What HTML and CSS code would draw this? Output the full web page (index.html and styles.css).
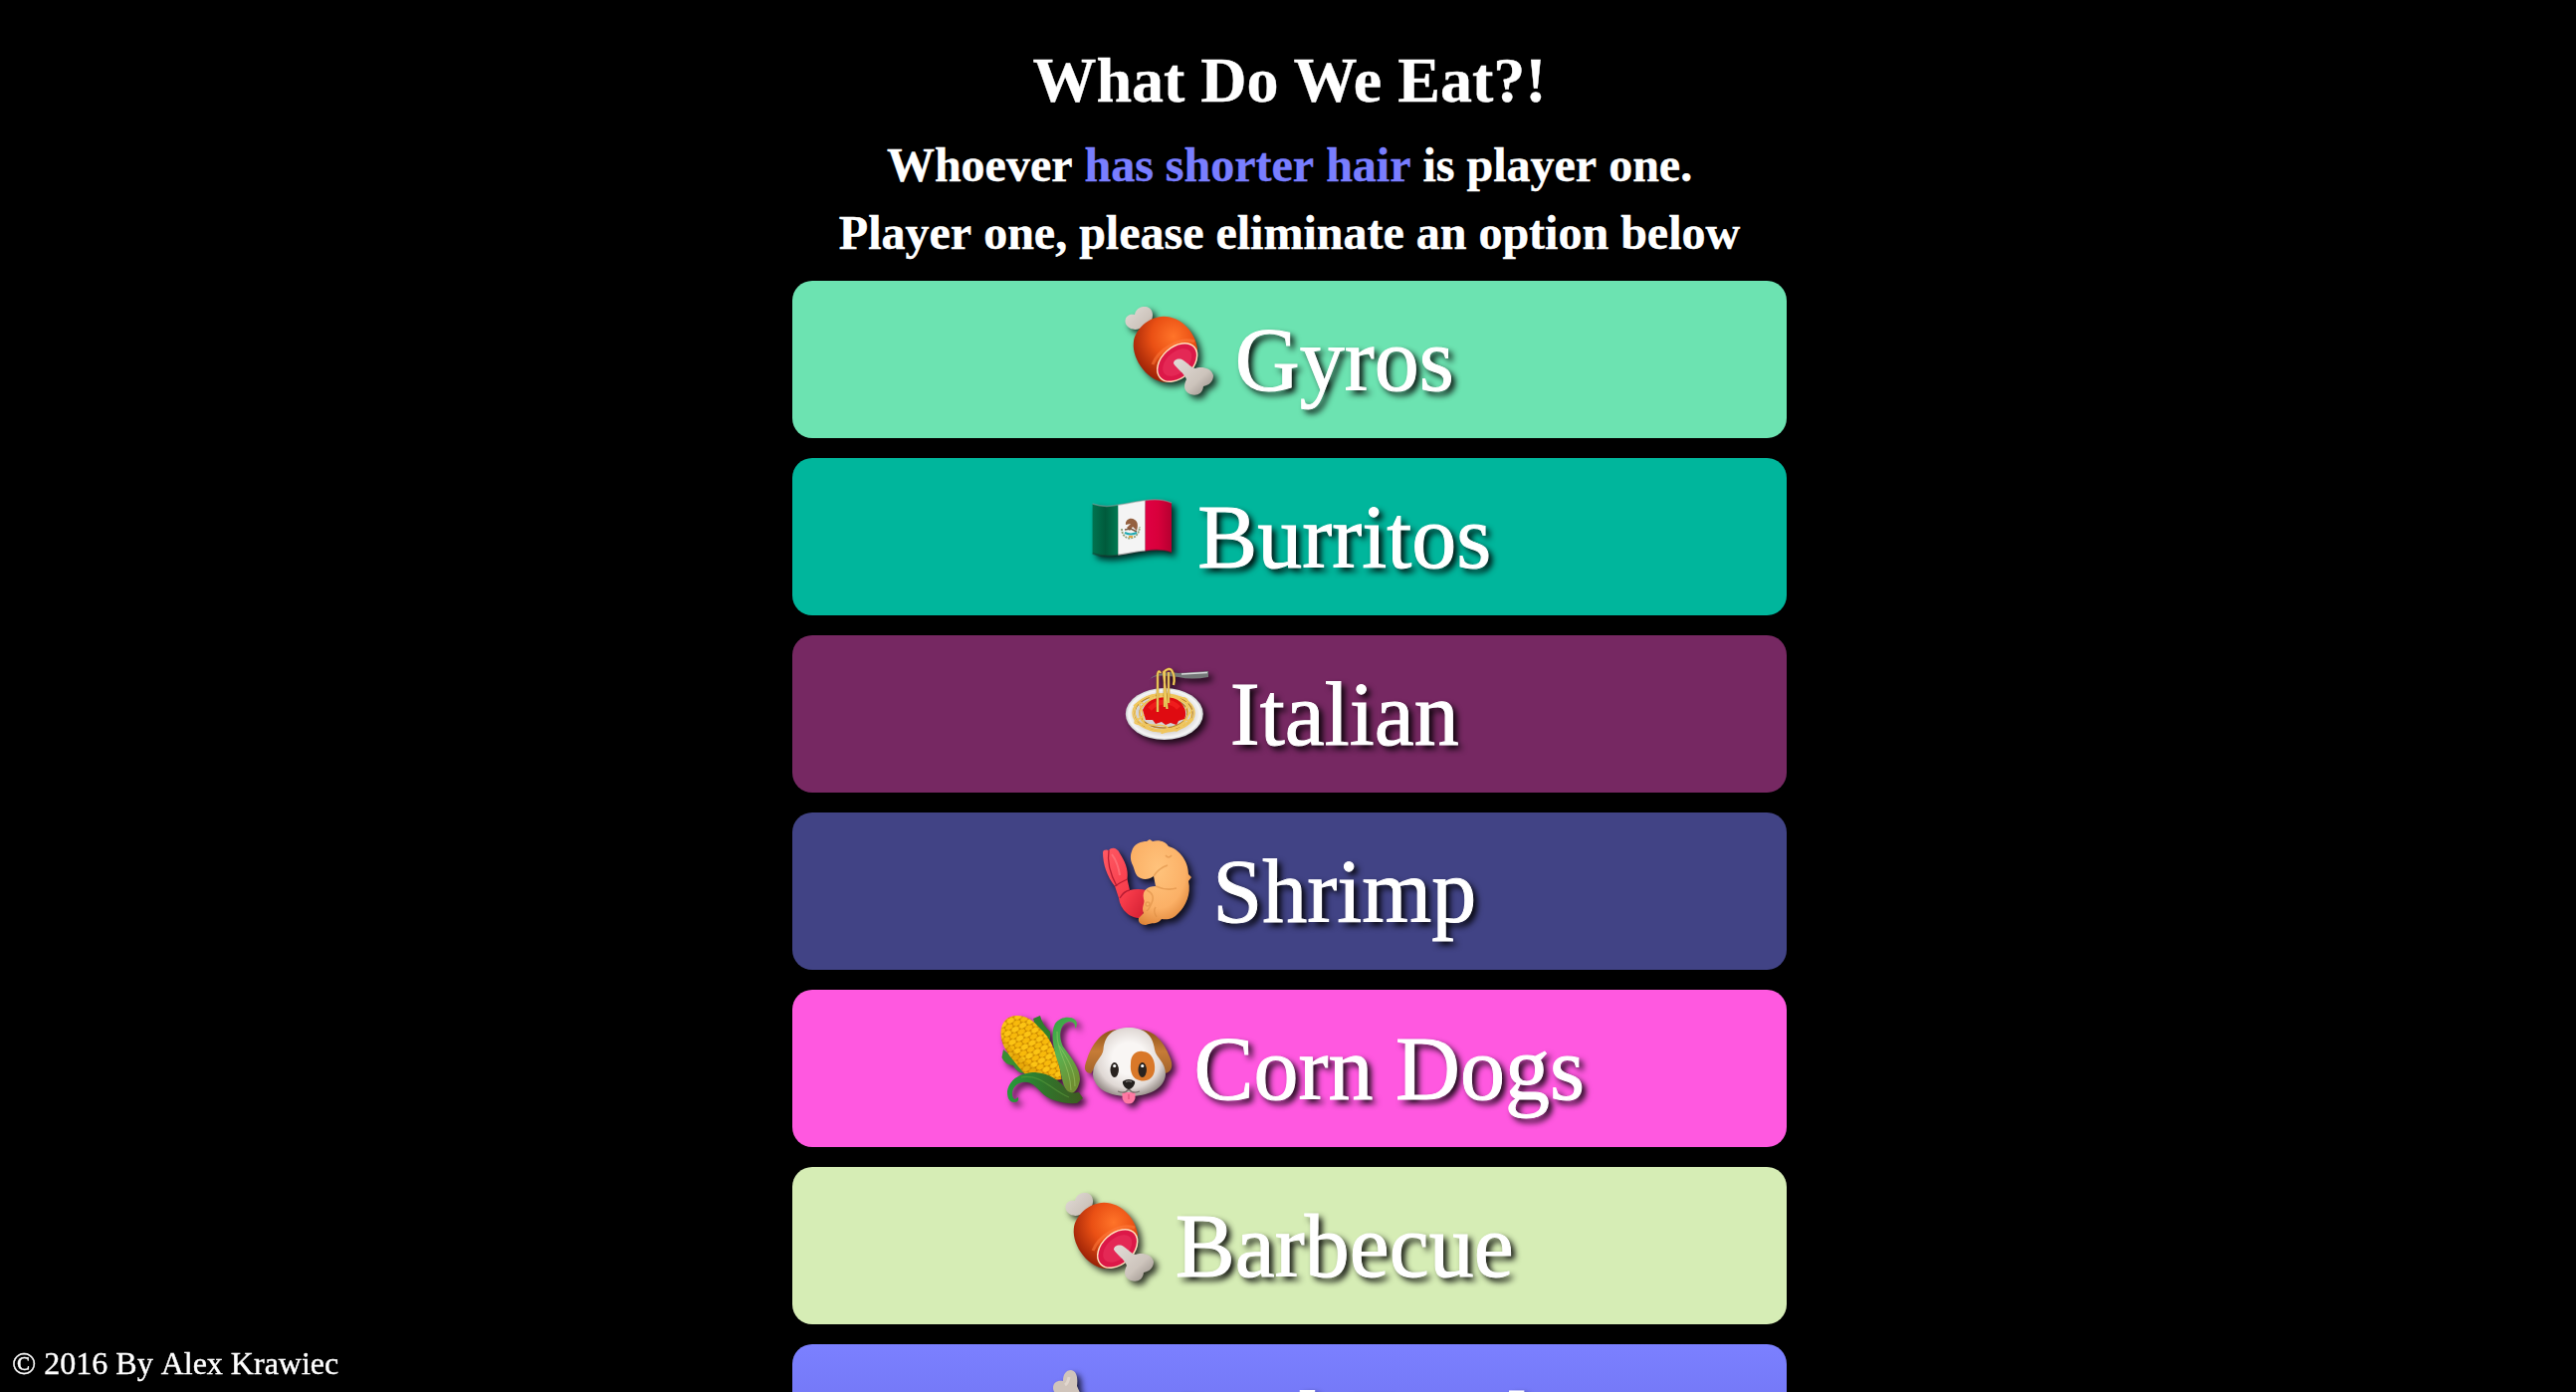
FILE: index.html
```html
<!DOCTYPE html>
<html lang="en">
<head>
<meta charset="utf-8">
<title>What Do We Eat?!</title>
<link rel="stylesheet" href="styles.css">
</head>
<body>
<svg class="defs" aria-hidden="true">
  <defs>
    <radialGradient id="meat" cx=".62" cy=".3" r=".75"><stop offset="0" stop-color="#ff7429"/><stop offset=".45" stop-color="#ea5014"/><stop offset="1" stop-color="#921c05"/></radialGradient>
    <linearGradient id="bone" x1="0" y1="0" x2="1" y2="1"><stop offset="0" stop-color="#e2dcd7"/><stop offset=".6" stop-color="#cdc4bc"/><stop offset="1" stop-color="#918882"/></linearGradient>
    <linearGradient id="mxgreen"><stop offset="0" stop-color="#00734f"/><stop offset=".5" stop-color="#005b3c"/><stop offset="1" stop-color="#007a53"/></linearGradient>
    <linearGradient id="mxred"><stop offset="0" stop-color="#e00043"/><stop offset=".5" stop-color="#d8003b"/><stop offset="1" stop-color="#b50030"/></linearGradient>
    <radialGradient id="plate"><stop offset=".7" stop-color="#d5d3d2"/><stop offset=".92" stop-color="#f6f6f6"/><stop offset="1" stop-color="#c8cccd"/></radialGradient>
    <radialGradient id="fried" cx=".45" cy=".35" r=".7"><stop offset="0" stop-color="#ffc37c"/><stop offset=".65" stop-color="#fbb066"/><stop offset="1" stop-color="#dc8236"/></radialGradient>
    <linearGradient id="tail" x1="0" y1="0" x2="1" y2="1"><stop offset="0" stop-color="#ff5a64"/><stop offset=".6" stop-color="#f73b4a"/><stop offset="1" stop-color="#cf1d30"/></linearGradient>
    <pattern id="kernels" width="8.6" height="10" patternUnits="userSpaceOnUse" patternTransform="rotate(-28)"><rect width="9" height="10" fill="#c88500"/><ellipse cx="4.3" cy="2.5" rx="4" ry="2.6" fill="#fcc414"/><ellipse cx="0" cy="7.5" rx="4" ry="2.6" fill="#f8ba0b"/><ellipse cx="8.6" cy="7.5" rx="4" ry="2.6" fill="#f8ba0b"/></pattern>
    <linearGradient id="leaf" x1="0" y1="0" x2=".4" y2="1"><stop offset="0" stop-color="#2fa243"/><stop offset=".5" stop-color="#5ab251"/><stop offset="1" stop-color="#6f8f32"/></linearGradient>
    <linearGradient id="husk"><stop offset="0" stop-color="#279b3c"/><stop offset=".5" stop-color="#31742b"/><stop offset="1" stop-color="#3f5a20"/></linearGradient>
    <radialGradient id="fur" cx=".5" cy=".45" r=".58"><stop offset=".4" stop-color="#f9f6f4"/><stop offset=".75" stop-color="#e0d9d5"/><stop offset="1" stop-color="#958c87"/></radialGradient>
    <linearGradient id="ear" x1="0" y1="0" x2="0" y2="1"><stop offset="0" stop-color="#8c5217"/><stop offset=".5" stop-color="#c67c37"/><stop offset="1" stop-color="#a3642a"/></linearGradient>
    <symbol id="meat-on-bone" viewBox="0 0 90 90">
      <path d="M16 22C8 25 1 20 1.500 14C2 8 8 7 11 8C12 2 17-.5 22 0C29 1 31 8 27 16L30 24L22 29Z" fill="url(#bone)"/>
      <path d="M9.800 36C11 23 25 10 40 9.800C58 10 72 26 74 42C73 56 59 74 44 76C26 77 8 54 9.800 36Z" fill="url(#meat)"/>
      <path d="M29 58C35 43 56 30 71 35" fill="none" stroke="#ff7b3c" stroke-width="3" opacity=".55"/>
      <ellipse cx="53.700" cy="56" rx="23" ry="15.500" transform="rotate(-42 53.700 56)" fill="#dc1848" stroke="#ffe1bd" stroke-width="1.500"/>
      <ellipse cx="53.700" cy="56" rx="17" ry="10.500" transform="rotate(-42 53.700 56)" fill="#e9335f" opacity=".6"/>
      <path d="M50 57C50 53 56 51 60 54C65 57 67 61 72 62C77 60 88 61 90 69C90 76 85 79 80 80C79 88 73 90 67 88C60 85 60 79 63 73C61 67 53 62 50 57Z" fill="url(#bone)"/>
    </symbol>
  </defs>
</svg>
<main class="page">
  <h1 class="title">What Do We Eat?!</h1>
  <h2 class="lead">Whoever <span class="rule">has shorter hair</span> is player one.</h2>
  <h2 class="lead">Player one, please eliminate an option below</h2>
  <div class="options">
    <div class="option gyros">
      <svg class="icon" viewBox="0 0 90 90"><use href="#meat-on-bone"/></svg>
      <span class="label">Gyros</span>
    </div>
    <div class="option burritos">
      <svg class="icon" viewBox="0 0 90 90">
        <path d="M5.600 20C14 23 23 23 31.500 21V71.500C23 73 14 73 5.600 70Z" fill="url(#mxgreen)"/>
        <path d="M31.300 21C40 20 49 17.500 58.700 16.500V67.500C49 68 40 71 31.300 71.700Z" fill="#f4f4f4"/>
        <path d="M58.600 16.500C68 15 77 15.500 85 19V69C77 66 68 66 58.600 67.500Z" fill="url(#mxred)"/>
        <path d="M5.600 20C14 23 23 23 31.500 21C40 20 49 17.500 58.700 16.500C68 15 77 15.500 85 19" fill="none" stroke="#999" stroke-width="1.500" opacity=".5"/>
        <path d="M5.600 70C14 73 23 73 31.300 71.500C40 71 49 68 58.600 67.500C68 66 77 66 85 69" fill="none" stroke="#222" stroke-width="2" opacity=".35"/>
        <path d="M35 45C35 58 52 58 53 43" fill="none" stroke="#8da078" stroke-width="1.800" stroke-dasharray="2 1"/>
        <path d="M39 41C38 36 44 33 48 36C52 38 51 44 50 47L46 43L43 47L40 44L44 40Z" fill="#94603f"/>
        <path d="M38 46L44 45L50 48" fill="none" stroke="#7a5a44" stroke-width="1.500"/>
        <path d="M38 49Q44 52 50 49" fill="none" stroke="#20a8b0" stroke-width="2"/>
        <path d="M42 52H46V54H42Z" fill="#e2a545"/>
      </svg>
      <span class="label">Burritos</span>
    </div>
    <div class="option italian">
      <svg class="icon" viewBox="0 0 90 90">
        <ellipse cx="45.800" cy="53" rx="39" ry="26" fill="url(#plate)"/>
        <g fill="none" stroke="#b8832c" stroke-width="1.600"><ellipse cx="45" cy="52" rx="29" ry="18"/><ellipse cx="45" cy="52" rx="24" ry="15"/></g>
        <g fill="none" stroke="#f0c65d" stroke-width="1.500">
          <ellipse cx="45" cy="52" rx="31" ry="19"/><ellipse cx="43" cy="51" rx="27" ry="18"/><ellipse cx="47" cy="53" rx="26" ry="17"/>
          <path d="M15 45Q22 38 27 45T20 58T32 64T46 70T59 66T71 59T67 48T58 37T44 36T30 38M20 42C28 55 20 64 32 69C43 74 48 64 58 70C67 66 66 56 74 49M31 37C36 30 40 42 47 35C56 32 59 41 69 42"/>
        </g>
        <path d="M24 49C29 37 43 35 54 37C64 39 70 51 66 58L60 60L58 64L52 62L47 64L43 61L37 63L34 59L27 59Z" fill="#df0b11"/>
        <path d="M31 48C39 39 53 39 60 47" fill="none" stroke="#ff2e28" stroke-width="5" opacity=".5"/>
        <path d="M29 20Q35 12 52 11L60 12L90 10V16Q73 19 60 16L50 15Q36 13 29 20Z" fill="#747878"/>
        <path d="M63 13L89 11.500" stroke="#d7dada" stroke-width="1.500"/>
        <path d="M39 51V13Q40 8 42 12M46 46V10M48.500 48L45 11Q50 6 53 9Q57 15 55 24M50 42V11" fill="none" stroke="#b3852a" stroke-width="2.600"/>
        <path d="M39 51V13Q40 8 42 12M46 46V10M48.500 48L45 11Q50 6 53 9Q57 15 55 24M50 42V11" fill="none" stroke="#f2cf62" stroke-width="1.600"/>
      </svg>
      <span class="label">Italian</span>
    </div>
    <div class="option shrimp">
      <svg class="icon" viewBox="0 0 90 90">
        <path d="M1 14C1 11 5 11 7 12C10 8 16 10 18 15C23 23 27 31 25.500 41L28 52Q36 50 45 52L41 80C35 81 28 78 25 75Q18 69 17 60L13 48C5 38 1 26 1 14Z" fill="url(#tail)"/>
        <path d="M7 12C5 24 9 37 15 48M13 48Q19 44 25.500 41M18 60Q22 53 28 52" fill="none" stroke="#b81c32" stroke-width="1.300"/>
        <path d="M10 16Q16 24 18 37" fill="none" stroke="#ff8087" stroke-width="2" opacity=".6"/>
        <path d="M30 13C32 5 40 3 45 3L48 1L51 3C57 1 64 3 67 8C78 11 87 23 87 36L90 39L87 43C90 56 84 68 77 75C72 81 66 82 60 81C56 87 50 84 44 87C39 87 36 84 37 80L42 75C39 69 44 65 42 61C40 52 46 48 54 48L52 38C48 41 43 42 39 40C33 38 33 31 31 27C29 23 28 18 30 13Z" fill="url(#fried)"/>
        <g fill="none" stroke="#d98b42" stroke-width="1.500" opacity=".55"><path d="M52 38Q57 30 66 27M54 48Q65 53 75 50M45 52Q54 56 50 65T45 72M64 17Q67 21 70 17M55 79Q51 73 54 69"/><circle cx="46" cy="66" r="2"/></g>
      </svg>
      <span class="label">Shrimp</span>
    </div>
    <div class="option corn-dogs">
      <div class="icons">
        <svg class="icon" viewBox="0 0 90 90">
          <path d="M40 3L47 0Q49 9 57 16V25L50 18Q42 12 40 3Z" fill="#2f7f2c"/>
          <path d="M10 34L22 44L31 58Q23 57 20 50Q11 49 8.500 42Z" fill="#398d32"/>
          <path d="M7.500 19C7 6 15-.5 24 0C34 0 41 6 46 12C58 22 66 41 68.500 64C54 66 40 64 31 58C21 46 8 33 7.500 19Z" fill="url(#kernels)"/>
          <path d="M7.500 19C8 33 21 46 31 58C40 64 54 66 68.500 64C48 58 22 42 7.500 19Z" fill="#b97600" opacity=".25"/>
          <path d="M82 13Q83 6 76 6C67 8 65 20 70 31C79 43 87 53 87 64C86 72 82 78 78 78C70 76 69 62 66 50C60 34 57 17 62 8C67 1 77 0 82 4Q86 8 82 13Z" fill="url(#leaf)"/>
          <path d="M64 16C63 37 77 49 78 75M66 30C74 43 82 54 82 71" fill="none" stroke="#9bc664" stroke-width="1" opacity=".6"/>
          <path d="M14 76C16 63 29 57 42 57C57 58 65 65 71 71C75 80 83 77 86 77L90 83L84 88C71 89 55 85 48 77C42 70 35 64 26 68C17 72 18 83 22 84L25 82Q26 87 21 87C15 87 14 81 14 76Z" fill="url(#husk)"/>
          <path d="M28 62C48 58 58 75 76 82" fill="none" stroke="#62a43e" stroke-width="1.200" opacity=".5"/>
        </svg>
        <svg class="icon" viewBox="0 0 90 90">
          <path d="M34 14C20 14 9 28 4 44C0 54 2 57 8 58L21 38Z" fill="url(#ear)"/>
          <path d="M57 14C72 14 82 28 87 41C92 52 88 57 82 58L70 38Z" fill="url(#ear)"/>
          <path d="M46 12C60 12 70 18 72 34C73 42 83 46 83 59C82 74 65 81 46 81C27 81 11 74 10 59C10 46 20 42 20.500 34C22 18 32 12 46 12Z" fill="url(#fur)"/>
          <path d="M48 48C48 39 54 35 60 36C69 36 73 46 72 55C71 63 64 67 57 65C50 64 47 57 48 48Z" fill="#d97829"/>
          <g fill="#29231f"><ellipse cx="31.700" cy="54.500" rx="4.200" ry="7.500"/><ellipse cx="59.700" cy="54.500" rx="4.200" ry="7.500"/></g>
          <g fill="#fff"><circle cx="31.700" cy="50.500" r="1.600"/><circle cx="59.700" cy="50.500" r="1.600"/></g>
          <path d="M39.500 77H52.500V83Q51 88.500 46 88.500T39.500 83Z" fill="#ff78a3"/>
          <path d="M46 79V84" stroke="#df4c7b" stroke-width="1.200"/>
          <path d="M35 76Q42 79 46 74Q50 79 57 76" fill="none" stroke="#78706c" stroke-width="1.300"/>
          <path d="M40 66Q46 62 52 66C53 69 49 74 46 74S39 69 40 66Z" fill="#24201e"/>
          <path d="M43 66.500Q46 65 49 66.500" fill="none" stroke="#8b8583" stroke-width="1.200"/>
        </svg>
      </div>
      <span class="label">Corn Dogs</span>
    </div>
    <div class="option barbecue">
      <svg class="icon" viewBox="0 0 90 90"><use href="#meat-on-bone"/></svg>
      <span class="label">Barbecue</span>
    </div>
    <div class="option soul-food">
      <svg class="icon" viewBox="0 0 90 90">
        <path d="M30 28C40 24 80 31 86 55C90 75 77 89 62 88C42 86 25 55 30 28Z" fill="url(#meat)"/>
        <path d="M19 31C14 27 5 25 5 18C5 12 10 10 15 11C15 4 18 0 23 0C29 1 30 8 29 16L36 32L28 39Z" fill="#d0c4bb"/>
        <path d="M17 15Q20 13 21 7" fill="none" stroke="#f1e8e0" stroke-width="3" opacity=".5"/>
      </svg>
      <span class="label">Soul Food</span>
    </div>
  </div>
</main>
<footer class="footer">© 2016 By Alex Krawiec</footer>
</body>
</html>
```
FILE: styles.css
```css
body {
  margin: 0;
  height: 1398px;
  overflow: hidden;
  background: #000;
  color: #fff;
  font-family: "Liberation Serif", "Times New Roman", serif;
}

.defs {
  position: absolute;
  width: 0;
  height: 0;
}

.page {
  display: flex;
  flex-direction: column;
  align-items: center;
  padding-top: 41px;
  padding-left: 3px;
}

.title {
  margin: 0 0 11px;
  font-size: 64px;
  line-height: 80px;
  -webkit-text-stroke: 0.4px;
}

.lead {
  margin: 0;
  font-size: 48px;
  line-height: 68px;
  font-kerning: none;
  -webkit-text-stroke: 0.4px;
}

.rule {
  color: #797eff;
}

.options {
  display: flex;
  flex-direction: column;
  gap: 20px;
  width: 999px;
  margin-top: 14px;
}

.option {
  display: flex;
  justify-content: center;
  align-items: flex-start;
  gap: 21.5px;
  box-sizing: border-box;
  height: 158px;
  padding-top: 26px;
  padding-right: 1px;
  border-radius: 20px;
}

.icons {
  display: flex;
}

.icon {
  flex: none;
  width: 90px;
  height: 90px;
  overflow: visible;
  filter: drop-shadow(4px 4px 3px rgba(0, 0, 0, 0.75));
}

.label {
  font-size: 90px;
  line-height: 107px;
  white-space: nowrap;
  text-shadow: 4px 4px 6px #000;
  -webkit-text-stroke: 1px;
}

.gyros { background: #6ce3b1; }
.burritos { background: #00b69c; }
.italian { background: #762862; }
.shrimp { background: #414385; }
.corn-dogs { background: #ff58e0; }
.barbecue { background: #d6edb5; }
.soul-food { background: linear-gradient(#7b80ff, #7478f6 60px); }

.footer {
  position: fixed;
  left: 12px;
  bottom: 9px;
  font-size: 32px;
  line-height: 40px;
  font-kerning: none;
  -webkit-text-stroke: 0.4px;
}
```
